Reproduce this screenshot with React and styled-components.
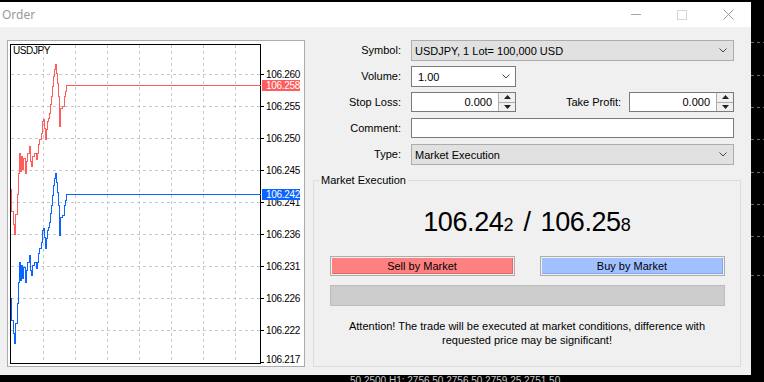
import React from 'react';
import styled, { createGlobalStyle } from 'styled-components';

const Global = createGlobalStyle`
  html, body { margin: 0; padding: 0; background: #000; overflow: hidden; }
  #root { width: 764px; height: 382px; }
`;

const UI = `"Liberation Sans", Arial, sans-serif`;

const Desktop = styled.div`
  width: 764px;
  height: 382px;
  background: #000;
  display: flex;
  flex-direction: column;
  overflow: hidden;
`;
const TopStrip = styled.div`height: 2px; flex: none;`;
const MiddleRow = styled.div`display: flex; height: 373px; flex: none;`;
const BottomStrip = styled.div`
  flex: 1;
  font: 10px ${UI};
  color: #c8c8c8;
  white-space: nowrap;
  overflow: hidden;
  line-height: 11px;
  padding-left: 350px;
`;

const Window = styled.div`
  width: 751px;
  flex: none;
  background: #f0f0f0;
  display: flex;
  flex-direction: column;
  font: 11px ${UI};
  color: #000;
`;
const TitleBar = styled.div`
  height: 25px;
  flex: none;
  background: #fff;
  display: flex;
  align-items: center;
`;
const Title = styled.div`
  padding-left: 2px;
  font: 12px "Noto Sans", "Open Sans", sans-serif;
  color: #9a9a9a;
  flex: 1;
`;
const CtrlButton = styled.div`
  width: 46px;
  height: 25px;
  display: flex;
  align-items: center;
  justify-content: center;
`;

const Body = styled.div`
  display: flex;
  gap: 8px;
  padding: 13px 0 0 7px;
`;

const ChartPanel = styled.div`
  width: 298px;
  height: 327px;
  box-sizing: border-box;
  border: 1px solid #adadad;
  background: #fff;
  flex: none;
  svg { display: block; }
`;

const FormPane = styled.div`
  width: 428px;
  display: flex;
  flex-direction: column;
`;
const FormGrid = styled.div`
  display: grid;
  grid-template-columns: 88px 323px;
  column-gap: 10px;
  row-gap: 5px;
  grid-auto-rows: 21px;
  align-items: start;
`;
const Label = styled.div`
  text-align: right;
  line-height: 21px;
  white-space: nowrap;
`;
const Select = styled.div`
  width: ${p => p.$w || 323}px;
  height: 21px;
  box-sizing: border-box;
  border: 1px solid ${p => (p.$light ? '#7a7a7a' : '#adadad')};
  background: ${p => (p.$light ? '#fff' : '#e1e1e1')};
  display: flex;
  align-items: center;
  justify-content: space-between;
  padding: 0 ${p => (p.$light ? 5 : 6)}px 0 ${p => (p.$light ? 6 : 3)}px;
`;
const TextBox = styled.div`
  width: 323px;
  height: 20px;
  box-sizing: border-box;
  border: 1px solid #7a7a7a;
  background: #fff;
`;
const SplitRow = styled.div`
  display: flex;
  align-items: center;
  width: 323px;
`;
const InnerLabel = styled.div`
  flex: 1;
  text-align: right;
  padding-right: 8px;
  line-height: 20px;
`;
const Spin = styled.div`
  width: 105px;
  height: 20px;
  box-sizing: border-box;
  border: 1px solid #7a7a7a;
  background: #fff;
  display: flex;
  flex: none;
`;
const SpinValue = styled.div`
  flex: 1;
  text-align: right;
  padding-right: 6px;
  line-height: 18px;
`;
const SpinButtons = styled.div`
  width: 16px;
  border-left: 1px solid #adadad;
  background: #f0f0f0;
  display: flex;
  flex-direction: column;
`;
const SpinHalf = styled.div`
  flex: 1;
  display: flex;
  align-items: center;
  justify-content: center;
  border-top: ${p => (p.$bottom ? '1px solid #adadad' : 'none')};
`;

const Group = styled.fieldset`
  margin: 9px 0 0 0;
  padding: 0;
  border: 1px solid #dcdcdc;
  min-width: 0;
  width: 428px;
  height: 193px;
  box-sizing: border-box;
`;
const Legend = styled.legend`
  margin-left: 5px;
  padding: 0 2px;
  line-height: 13px;
`;
const GroupContent = styled.div`
  display: flex;
  flex-direction: column;
  align-items: center;
  padding-top: 20px;
`;
const Price = styled.div`
  height: 30px;
  line-height: 30px;
  font: 27px ${UI};
  letter-spacing: -0.4px;
  white-space: nowrap;
`;
const Small = styled.span`font-size: 18px; letter-spacing: 0;`;
const Slash = styled.span`padding: 0 10px;`;

const ButtonRow = styled.div`
  display: flex;
  gap: 25px;
  margin-top: 19px;
`;
const TradeButton = styled.div`
  width: 185px;
  height: 20px;
  box-sizing: border-box;
  border: 1px solid #adadad;
  padding: 1px;
  background: #f0f0f0;
  display: flex;
`;
const ButtonFace = styled.div`
  flex: 1;
  background: ${p => p.$c};
  box-shadow: inset -1px -1px 0 ${p => p.$d};
  text-align: center;
  line-height: 16px;
`;
const Progress = styled.div`
  width: 395px;
  height: 21px;
  box-sizing: border-box;
  border: 1px solid #bcbcbc;
  background: #cccccc;
  margin-top: 9px;
`;
const Attention = styled.div`
  margin-top: 13px;
  text-align: center;
  line-height: 14px;
  white-space: nowrap;
`;

const Chevron = () => (
  <svg width="8" height="5" viewBox="0 0 8 5">
    <polyline points="0.5,0.5 4,4 7.5,0.5" fill="none" stroke="#444" strokeWidth="1" />
  </svg>
);
const Tri = ({ up }) => (
  <svg width="7" height="4" viewBox="0 0 7 4">
    <polygon points={up ? '3.5,0 7,4 0,4' : '0,0 7,0 3.5,4'} fill="#222" />
  </svg>
);

const SpinInput = ({ value }) => (
  <Spin>
    <SpinValue>{value}</SpinValue>
    <SpinButtons>
      <SpinHalf><Tri up /></SpinHalf>
      <SpinHalf $bottom><Tri /></SpinHalf>
    </SpinButtons>
  </Spin>
);

const BLUE = [
  [11,297],[11,320],[13,320],[13,333],[14,333],[14,343],[15,343],[15,323],[17,323],[17,303],[18,303],[18,282],[19,282],[19,262],[20,262],[20,280],[21,280],[21,265],[22,265],[22,278],[23,278],[23,267],[25,267],[25,282],[26,282],[26,270],[27,270],[27,262],[29,262],[29,255],[30,255],[30,270],[31,270],[31,275],[32,275],[32,265],[34,265],[34,262],[36,262],[36,268],[37,268],[37,262],[38,262],[38,253],[39,253],[39,248],[41,248],[41,242],[42,242],[42,230],[43,230],[43,228],[44,228],[44,237],[45,237],[45,248],[46,248],[46,238],[47,238],[47,230],[48,230],[48,227],[49,227],[49,222],[50,222],[50,213],[51,213],[51,205],[52,205],[52,195],[53,195],[53,185],[54,185],[54,178],[55,178],[55,173],[56,173],[56,182],[57,182],[57,192],[58,192],[58,205],[59,205],[59,235],[60,235],[60,217],[62,217],[62,215],[64,215],[64,205],[65,205],[65,200],[66,200],[66,194],[260,194]
];
const toPts = (arr, dy) => arr.map(([x, y]) => `${x},${y + dy}`).join(' ');

const LEVELS = [
  [74, '106.260', 4], [106, '106.255', 4], [138, '106.250', 4], [170, '106.245', 4], [202, '106.241', 4],
  [234, '106.236', 4], [266, '106.231', 4], [298, '106.226', 4], [330, '106.222', 4], [362, '106.217', 1],
];
const VLINES = [43, 75, 107, 139, 171, 203, 235];

const Chart = () => (
  <svg width="296" height="325" viewBox="8 41 296 325" fontFamily={UI} fontSize="10">
    <g stroke="#c8c8c8" strokeDasharray="3 3" shapeRendering="crispEdges">
      {LEVELS.slice(0, 9).map(([y]) => (
        <line key={y} x1="11" x2="260" y1={y + 0.5} y2={y + 0.5} />
      ))}
      {VLINES.map(x => (
        <line key={x} x1={x + 0.5} x2={x + 0.5} y1="45" y2="363" />
      ))}
    </g>
    <rect x="10.5" y="44.5" width="250" height="319" fill="none" stroke="#000" shapeRendering="crispEdges" />
    <g stroke="#000" shapeRendering="crispEdges">
      {LEVELS.map(([y]) => (
        <line key={y} x1="261" x2="264" y1={y + 0.5} y2={y + 0.5} />
      ))}
    </g>
    {LEVELS.map(([y, t, off]) => (
      <text key={t} x="266" y={y + off} fill="#000" letterSpacing="-0.3">{t}</text>
    ))}
    <text x="13" y="54" fill="#000" letterSpacing="-0.4">USDJPY</text>
    <g transform="translate(0.5 0.5)" fill="none" strokeWidth="1" shapeRendering="crispEdges">
      <polyline points={toPts(BLUE, -109)} stroke="#ff5c5c" />
      <polyline points={toPts(BLUE, 0)} stroke="#0a64ff" />
    </g>
    <rect x="262" y="80" width="38" height="11" fill="#ff5c5c" />
    <text x="266" y="89" fill="#fff" letterSpacing="-0.3">106.258</text>
    <rect x="262" y="189" width="38" height="11" fill="#0a64ff" />
    <text x="266" y="198" fill="#fff" letterSpacing="-0.3">106.242</text>
  </svg>
);

const SideStrip = styled.div`
  flex: 1;
  svg { display: block; }
`;

export default function App() {
  return (
    <Desktop>
      <Global />
      <TopStrip />
      <MiddleRow>
        <Window>
          <TitleBar>
            <Title>Order</Title>
            <CtrlButton>
              <svg width="10" height="1"><rect width="10" height="1" fill="#a6a6a6" /></svg>
            </CtrlButton>
            <CtrlButton>
              <svg width="10" height="10"><rect x="0.5" y="0.5" width="9" height="9" fill="none" stroke="#d6d6d6" /></svg>
            </CtrlButton>
            <CtrlButton>
              <svg width="11" height="11" viewBox="0 0 11 11">
                <path d="M0.5 0.5 L10.5 10.5 M10.5 0.5 L0.5 10.5" stroke="#9c9c9c" strokeWidth="1" />
              </svg>
            </CtrlButton>
          </TitleBar>
          <Body>
            <ChartPanel><Chart /></ChartPanel>
            <FormPane>
              <FormGrid>
                <Label>Symbol:</Label>
                <Select><span>USDJPY, 1 Lot= 100,000 USD</span><Chevron /></Select>
                <Label>Volume:</Label>
                <Select $light $w={105}><span>1.00</span><Chevron /></Select>
                <Label>Stop Loss:</Label>
                <SplitRow>
                  <SpinInput value="0.000" />
                  <InnerLabel>Take Profit:</InnerLabel>
                  <SpinInput value="0.000" />
                </SplitRow>
                <Label>Comment:</Label>
                <TextBox />
                <Label>Type:</Label>
                <Select><span>Market Execution</span><Chevron /></Select>
              </FormGrid>
              <Group>
                <Legend>Market Execution</Legend>
                <GroupContent>
                  <Price>106.24<Small>2</Small><Slash>/</Slash>106.25<Small>8</Small></Price>
                  <ButtonRow>
                    <TradeButton><ButtonFace $c="#ff8080" $d="#e06a6a">Sell by Market</ButtonFace></TradeButton>
                    <TradeButton><ButtonFace $c="#a0c0ff" $d="#86a6e6">Buy by Market</ButtonFace></TradeButton>
                  </ButtonRow>
                  <Progress />
                  <Attention>
                    Attention! The trade will be executed at market conditions, difference with
                    <br />
                    requested price may be significant!
                  </Attention>
                </GroupContent>
              </Group>
            </FormPane>
          </Body>
        </Window>
        <SideStrip>
          <svg width="13" height="373">
            <g stroke="#6a6a6a" strokeDasharray="3 3">
              {[40, 73, 105, 137, 170, 202, 234, 273].map(y => (
                <line key={y} x1="0" x2="13" y1={y + 0.5} y2={y + 0.5} />
              ))}
            </g>
          </svg>
        </SideStrip>
      </MiddleRow>
      <BottomStrip>50.2500 H1: 2756.50 2756.50 2759.25 2751.50</BottomStrip>
    </Desktop>
  );
}
